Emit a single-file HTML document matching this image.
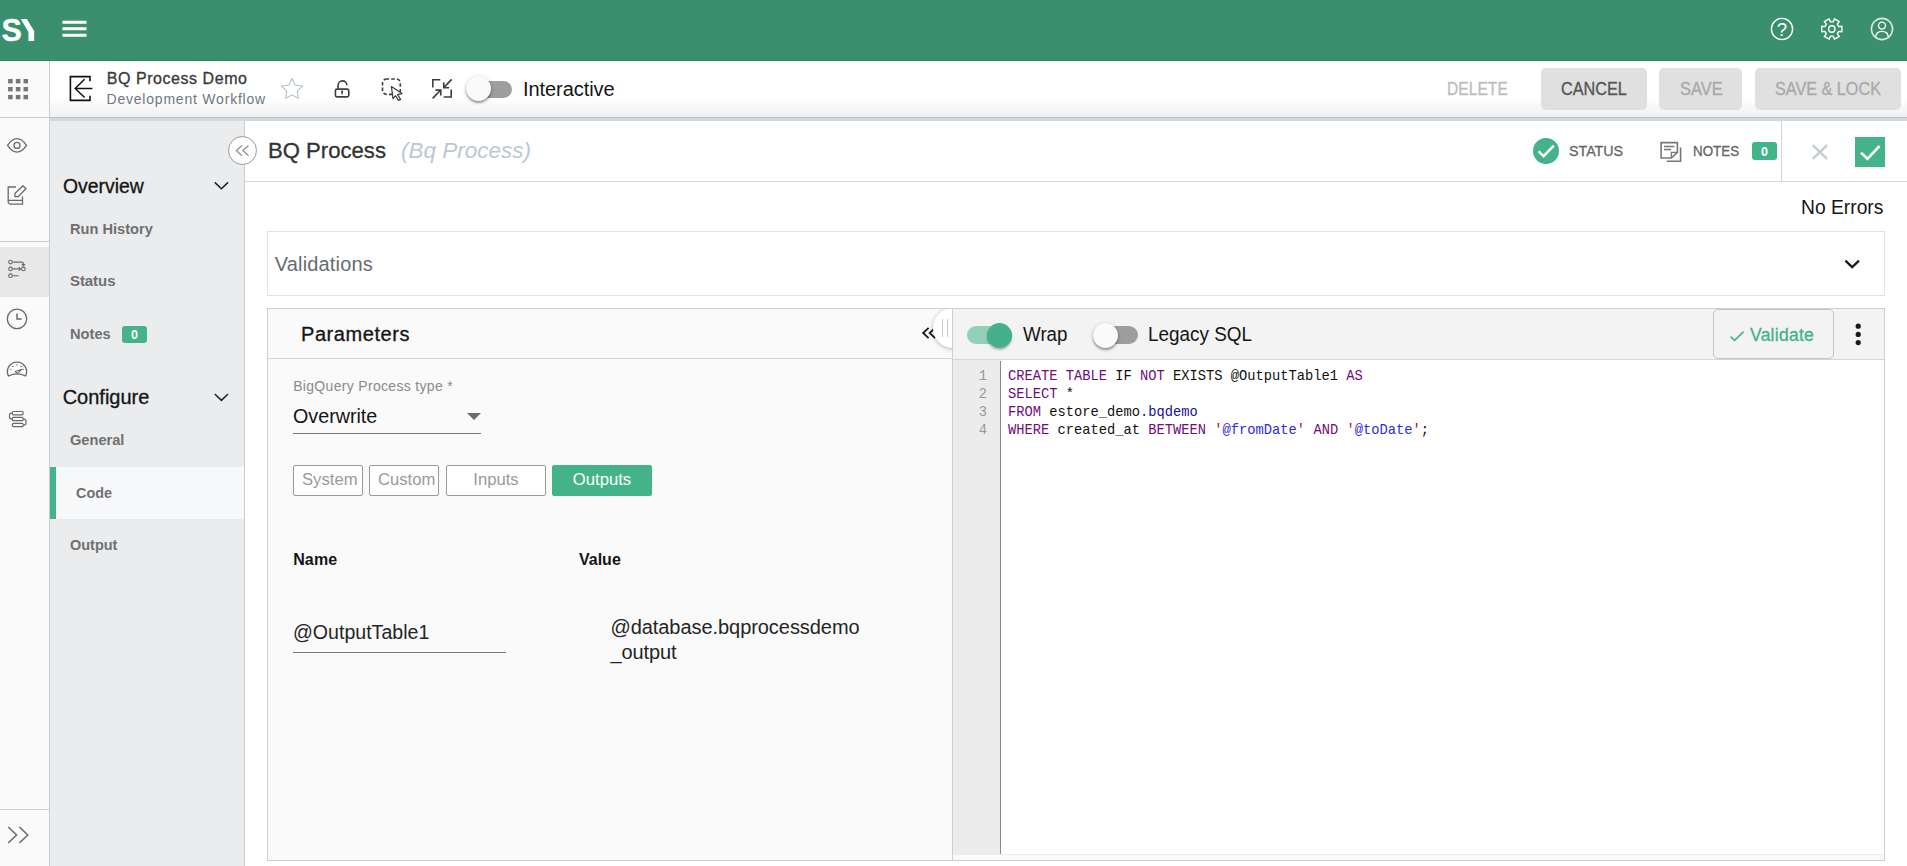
<!DOCTYPE html>
<html lang="en"><head><meta charset="utf-8"><title>BQ Process Demo</title>
<style>
*{box-sizing:border-box;margin:0;padding:0}
html,body{width:1907px;height:866px;overflow:hidden;background:#fff;font-family:"Liberation Sans",sans-serif}
.a{position:absolute}
.t{position:absolute;white-space:pre}
#top{left:0;top:0;width:1907px;height:61px;background:#3a8f6e;border-bottom:1px solid #318767}
#rail{left:0;top:61px;width:50px;height:805px;background:#fafafa;border-right:1px solid #c3ced8}
#tool{left:50px;top:61px;width:1857px;height:56px;background:linear-gradient(#fff 0,#fff 36px,#f1f1f1 56px)}
#band{left:50px;top:117px;width:1857px;height:4px;background:#d4d9dd;border-top:1px solid #b7c0c6}
#side{left:50px;top:121px;width:195px;height:745px;background:#ebecee;border-right:1px solid #c9ced3}
#main{left:245px;top:121px;width:1662px;height:745px;background:#fff}
.btn{border-radius:5px;background:#e0e0e0;height:42px;top:68px}
.pill{background:#45b38a;border-radius:3px}
.tab{top:465px;height:31px;border:1px solid #9a9a9a;background:#fff;border-radius:2px;color:#9a9a9a;font-size:16.67px;line-height:28px;text-align:center;white-space:nowrap}
svg{position:absolute;overflow:visible}
.code,.ln{font-family:"Liberation Mono",monospace;font-size:13.75px;line-height:18px;white-space:pre;color:#111}
.ln{text-align:right;color:#999}
.k{color:#730a7e}.v{color:#2b2be0}.p{color:#221199}.s{color:#aa1111}
.m{-webkit-text-stroke:.35px currentColor}

</style></head>
<body>
<div id="top" class="a"></div>
<div id="rail" class="a"></div>
<div id="tool" class="a"></div>
<div id="band" class="a"></div>
<div id="side" class="a"></div>
<div id="main" class="a"></div>

<!-- top bar -->
<span class="a" style="left:1.6px;top:11px;font-size:30.5px;font-weight:700;line-height:38px;color:#fff;-webkit-text-stroke:.4px #fff">S</span>
<span class="a" style="left:21.2px;top:11px;font-size:30.5px;font-weight:700;line-height:38px;color:#fff;-webkit-text-stroke:1.6px #fff;clip-path:polygon(-2px 8px,5.8px 8px,13.1px 20.6px,13.1px 30px,-2px 30px)">Y</span>
<svg style="left:62px;top:20px" width="25" height="18" viewBox="0 0 25 18"><path d="M0.5 2.3h24M0.5 8.8h24M0.5 15.3h24" stroke="#fff" stroke-width="3" fill="none"/></svg>

<!-- rail dividers -->
<div class="a" style="left:0;top:117px;width:49px;height:1px;background:#c3ced8"></div>
<div class="a" style="left:0;top:241px;width:49px;height:1px;background:#c3ced8"></div>
<div class="a" style="left:0;top:247px;width:49px;height:50px;background:#e8e8e8"></div>
<div class="a" style="left:0;top:809px;width:49px;height:1px;background:#c3ced8"></div>

<!-- toolbar buttons -->
<div class="a btn" style="left:1541px;width:106px"></div>
<div class="a btn" style="left:1659px;width:83px"></div>
<div class="a btn" style="left:1755px;width:146px"></div>

<!-- toolbar toggle -->
<div class="a" style="left:467px;top:81px;width:45px;height:17px;border-radius:9px;background:#9e9e9e"></div>
<div class="a" style="left:466px;top:76px;width:25px;height:25px;border-radius:50%;background:#fafafa;box-shadow:0 2px 2px rgba(0,0,0,.3),0 1px 4px rgba(0,0,0,.2)"></div>

<!-- side nav -->
<div class="a" style="left:50px;top:467px;width:194px;height:52px;background:#f8f9fb"></div>
<div class="a" style="left:50px;top:467px;width:6px;height:52px;background:#45b38a"></div>
<div class="a pill" style="left:122px;top:326px;width:25px;height:17px"></div>

<!-- main header -->
<div class="a" style="left:245px;top:181px;width:1662px;height:1px;background:#d9d9d9"></div>
<div class="a" style="left:1781px;top:121px;width:1px;height:60px;background:#d4d4d4"></div>
<div class="a" style="left:228px;top:136px;width:29px;height:29px;border-radius:50%;background:#fff;border:1.5px solid #9b9b9b"></div>
<div class="a" style="left:1533px;top:138px;width:26px;height:26px;border-radius:50%;background:#45b38a"></div>
<div class="a pill" style="left:1752px;top:142px;width:25px;height:18px"></div>
<div class="a" style="left:1855px;top:137px;width:30px;height:30px;background:#45b38a"></div>

<!-- validations -->
<div class="a" style="left:267px;top:231px;width:1618px;height:65px;border:1px solid #dde3ea;background:#fff"></div>

<!-- panel -->
<div class="a" style="left:267px;top:308px;width:1618px;height:553px;border:1px solid #cfcfcf;background:#fafafa"></div>
<div class="a" style="left:268px;top:358px;width:685px;height:1px;background:#d4d4d4"></div>
<div class="a" style="left:952px;top:309px;width:1px;height:551px;background:#cfcfcf"></div>
<div class="a" style="left:953px;top:309px;width:931px;height:51px;background:#f3f3f3;border-bottom:1px solid #d6d6d6"></div>
<div class="a" style="left:953px;top:360px;width:47px;height:494px;background:#ececec"></div><div class="a" style="left:1000px;top:361px;width:1px;height:493px;background:#8a8a8a"></div>
<div class="a" style="left:1001px;top:360px;width:883px;height:494px;background:#fff"></div>
<div class="a" style="left:953px;top:854px;width:931px;height:6px;background:#fafafa;border-top:1px solid #ececec"></div>

<!-- select -->
<div class="a" style="left:293px;top:433px;width:188px;height:1px;background:#7a7a7a"></div>
<svg style="left:467px;top:413px" width="14" height="7" viewBox="0 0 14 7"><path d="M0 0h14l-7 7z" fill="#6b6b6b"/></svg>

<!-- tabs -->
<div class="a tab" style="left:293px;width:70px;text-align:left;padding-left:8px">System</div>
<div class="a tab" style="left:369px;width:70px;text-align:left;padding-left:8px">Custom</div>
<div class="a tab" style="left:446px;width:100px">Inputs</div>
<div class="a tab" style="left:552px;width:100px;background:#45b38a;border-color:#45b38a;color:#fff">Outputs</div>

<!-- input underline -->
<div class="a" style="left:293px;top:652px;width:213px;height:1px;background:#7a7a7a"></div>

<!-- code toggles -->
<div class="a" style="left:967px;top:326px;width:45px;height:18px;border-radius:9px;background:#93d0b8"></div>
<div class="a" style="left:987px;top:323px;width:25px;height:25px;border-radius:50%;background:#45b08a;box-shadow:0 2px 2px rgba(0,0,0,.25)"></div>
<div class="a" style="left:1093px;top:326px;width:45px;height:18px;border-radius:9px;background:#9e9e9e"></div>
<div class="a" style="left:1093px;top:323px;width:25px;height:25px;border-radius:50%;background:#fafafa;box-shadow:0 2px 2px rgba(0,0,0,.3),0 1px 4px rgba(0,0,0,.2)"></div>

<!-- validate button -->
<div class="a" style="left:1713px;top:309px;width:121px;height:50px;border:1px solid #c4c4c4;border-radius:5px;background:#f3f3f3"></div>
<svg style="left:1768px;top:15px" width="28" height="28" viewBox="1768 15 28 28"><circle cx="1782" cy="29" r="10.6" fill="none" stroke="#fff" stroke-width="1.4"/><text x="1782" y="35.6" font-family="Liberation Sans, sans-serif" font-size="18.5" fill="#fff" text-anchor="middle">?</text></svg>
<svg style="left:1818px;top:15px" width="28" height="28" viewBox="1818 15 28 28"><path d="M1833.22,21.84 L1834.45,18.84 L1839.27,21.62 L1837.29,24.19 L1838.71,26.65 L1841.92,26.22 L1841.92,31.78 L1838.71,31.35 L1837.29,33.81 L1839.27,36.38 L1834.45,39.16 L1833.22,36.16 L1830.38,36.16 L1829.15,39.16 L1824.33,36.38 L1826.31,33.81 L1824.89,31.35 L1821.68,31.78 L1821.68,26.22 L1824.89,26.65 L1826.31,24.19 L1824.33,21.62 L1829.15,18.84 L1830.38,21.84Z" fill="none" stroke="#fff" stroke-width="1.4" stroke-linejoin="round"/><circle cx="1831.8" cy="29" r="3.2" fill="none" stroke="#fff" stroke-width="1.4"/></svg>
<svg style="left:1868px;top:15px" width="28" height="28" viewBox="1868 15 28 28"><circle cx="1882" cy="29" r="10.6" fill="none" stroke="#fff" stroke-opacity=".8" stroke-width="1.6"/><circle cx="1882" cy="25.6" r="3.5" fill="none" stroke="#fff" stroke-width="1.4"/><path d="M1875.6,37.2 C1876,32.4 1879,31.4 1882,31.4 C1885,31.4 1888,32.4 1888.4,37.2" fill="none" stroke="#fff" stroke-width="1.4"/></svg>
<svg style="left:6px;top:76px" width="26" height="26" viewBox="6 76 26 26"><rect x="8.1" y="79" width="4.6" height="4.4" fill="#767676"/><rect x="8.1" y="87" width="4.6" height="4.4" fill="#767676"/><rect x="8.1" y="94.9" width="4.6" height="4.4" fill="#767676"/><rect x="15.8" y="79" width="4.6" height="4.4" fill="#767676"/><rect x="15.8" y="87" width="4.6" height="4.4" fill="#767676"/><rect x="15.8" y="94.9" width="4.6" height="4.4" fill="#767676"/><rect x="23.5" y="79" width="4.6" height="4.4" fill="#767676"/><rect x="23.5" y="87" width="4.6" height="4.4" fill="#767676"/><rect x="23.5" y="94.9" width="4.6" height="4.4" fill="#767676"/></svg>
<svg style="left:66px;top:72px" width="30" height="32" viewBox="66 72 30 32"><path d="M90,81.2V76.6H70.4V100.4H90V95.8" fill="none" stroke="#111" stroke-width="1.6"/><path d="M92.4,88.5H75.2M84.6,79.3L75.2,88.5L84.6,97.5" fill="none" stroke="#111" stroke-width="1.5"/></svg>
<svg style="left:279px;top:75px" width="26" height="26" viewBox="279 75 26 26"><path d="M292.00,78.50 L295.23,84.95 L302.37,86.03 L297.23,91.10 L298.41,98.22 L292.00,94.90 L285.59,98.22 L286.77,91.10 L281.63,86.03 L288.77,84.95Z" fill="none" stroke="#b3c2ce" stroke-width="1.1" stroke-linejoin="round"/></svg>
<svg style="left:331px;top:77px" width="22" height="24" viewBox="331 77 22 24"><rect x="335.4" y="89.1" width="13.4" height="7.8" rx="1.6" fill="none" stroke="#423c3c" stroke-width="1.6"/><path d="M338.1,88.6V85.4A4.4,4.4 0 0 1 346.9,85.2" fill="none" stroke="#423c3c" stroke-width="1.6"/><circle cx="342.1" cy="91.6" r="1.1" fill="#423c3c"/><path d="M342.1,91.6V94.6" stroke="#423c3c" stroke-width="1.3"/></svg>
<svg style="left:379px;top:76px" width="26" height="27" viewBox="379 76 26 27"><rect x="382.5" y="79" width="17.8" height="15.4" rx="4" fill="none" stroke="#423c3c" stroke-width="1.6" stroke-dasharray="3.6 2.1" stroke-dashoffset="1"/><path d="M391.4,86.6L402,93.6L397.6,94.6L400.6,99.4L398.4,100.4L395.6,95.7L393,98.6Z" fill="#fff" stroke="#423c3c" stroke-width="1.2" stroke-linejoin="round"/></svg>
<svg style="left:430px;top:77px" width="24" height="24" viewBox="430 77 24 24"><path d="M440.3,79.8H432.8V87.4M443.6,97H451.2V89.6" fill="none" stroke="#423c3c" stroke-width="1.6"/><path d="M451.6,79.4L443.8,87.6M443.7,82.2V87.8H449.2" fill="none" stroke="#423c3c" stroke-width="1.6"/><path d="M432.6,98.4L440.6,90.2M435.4,90.1H440.8V95.6" fill="none" stroke="#423c3c" stroke-width="1.6"/></svg>
<svg style="left:5px;top:135px" width="25" height="20" viewBox="5 135 25 20"><path d="M7.6,145.4Q12,138.7 17,138.7Q22,138.7 26.5,145.4Q22,152.1 17,152.1Q12,152.1 7.6,145.4Z" fill="none" stroke="#6a6a6a" stroke-width="1.3"/><circle cx="17" cy="145.4" r="3" fill="none" stroke="#6a6a6a" stroke-width="1.3"/></svg>
<svg style="left:5px;top:183px" width="24" height="24" viewBox="5 183 24 24"><path d="M16,187H8.2V201.6A2.4,2.4 0 0 0 10.6,204.2H22.5V196.6M8.4,200.3H22.5" fill="none" stroke="#6a6a6a" stroke-width="1.3"/><path d="M22.9,185.7L25.9,188.8L18.2,196.6H14.9V193.5Z" fill="none" stroke="#6a6a6a" stroke-width="1.3" stroke-linejoin="round"/></svg>
<svg style="left:6px;top:258px" width="22" height="22" viewBox="6 258 22 22"><circle cx="10.5" cy="262.1" r="1.8" fill="none" stroke="#6a6a6a" stroke-width="1.1"/><circle cx="10.5" cy="268.9" r="1.8" fill="none" stroke="#6a6a6a" stroke-width="1.1"/><circle cx="10.5" cy="275.7" r="1.8" fill="none" stroke="#6a6a6a" stroke-width="1.1"/><circle cx="23.4" cy="268.9" r="1.8" fill="none" stroke="#6a6a6a" stroke-width="1.1"/><path d="M12.6,262.1H21.2Q23.4,262.1 23.4,264V265.6M21.8,264.2L23.4,265.9L25,264.2M12.6,268.9H20.4M18.8,267.2L20.6,268.9L18.8,270.6M12.6,275.7H18.6" fill="none" stroke="#6a6a6a" stroke-width="1.1"/></svg>
<svg style="left:5px;top:307px" width="24" height="24" viewBox="5 307 24 24"><circle cx="17" cy="318.9" r="9.7" fill="none" stroke="#6a6a6a" stroke-width="1.3"/><path d="M17,313.4V319H21.6" fill="none" stroke="#6a6a6a" stroke-width="1.5"/></svg>
<svg style="left:5px;top:359px" width="24" height="20" viewBox="5 359 24 20"><path d="M8.4,376A9.6,9.6 0 1 1 25.6,376Q17,371.6 8.4,376Z" fill="none" stroke="#6a6a6a" stroke-width="1.3" stroke-linejoin="round"/><circle cx="10.80" cy="369.34" r="0.7" fill="#6a6a6a"/><circle cx="12.76" cy="366.54" r="0.7" fill="#6a6a6a"/><circle cx="17.00" cy="365.00" r="0.7" fill="#6a6a6a"/><circle cx="21.24" cy="366.54" r="0.7" fill="#6a6a6a"/><circle cx="23.20" cy="369.34" r="0.7" fill="#6a6a6a"/><path d="M15.2,371.4L22,369.2L17.4,373.6Z" fill="none" stroke="#6a6a6a" stroke-width="1.1" stroke-linejoin="round"/></svg>
<svg style="left:7px;top:409px" width="22" height="20" viewBox="7 409 22 20"><rect x="12.4" y="411.5" width="10.7" height="3.3" rx="1" fill="none" stroke="#6a6a6a" stroke-width="1.2"/><rect x="12.4" y="417.4" width="10.7" height="3.3" rx="1" fill="none" stroke="#6a6a6a" stroke-width="1.2"/><rect x="12.4" y="423.3" width="10.7" height="3.3" rx="1" fill="none" stroke="#6a6a6a" stroke-width="1.2"/><path d="M12.4,413.1H11.6Q9.5,413.1 9.5,415.1V417.1Q9.5,419.1 11.6,419.1H12.4M23.1,419.1H23.9Q26,419.1 26,421.1V423Q26,425 23.9,425H23.1" fill="none" stroke="#6a6a6a" stroke-width="1.2"/></svg>
<svg style="left:6px;top:825px" width="24" height="20" viewBox="6 825 24 20"><path d="M8.2,827L16.6,835L8.2,843M19.4,827L27.8,835L19.4,843" fill="none" stroke="#6a6a6a" stroke-width="1.5"/></svg>
<svg style="left:213px;top:180px" width="17" height="11" viewBox="213 180 17 11"><path d="M214.8,182.4L221.4,188.8L228,182.4" fill="none" stroke="#222" stroke-width="1.5"/></svg>
<svg style="left:213px;top:392px" width="17" height="11" viewBox="213 392 17 11"><path d="M214.8,394L221.4,400.4L228,394" fill="none" stroke="#222" stroke-width="1.5"/></svg>
<svg style="left:233px;top:143px" width="20" height="15" viewBox="233 143 20 15"><path d="M241.9,145.4L236.4,150.6L241.9,155.7M248.5,145.4L243,150.6L248.5,155.7" fill="none" stroke="#949494" stroke-width="1.4"/></svg>
<svg style="left:1534px;top:140px" width="24" height="22" viewBox="1534 140 24 22"><path d="M1538.6,151.4L1543.6,156.2L1553.8,145.6" fill="none" stroke="#fff" stroke-width="2.4"/></svg>
<svg style="left:1658px;top:140px" width="25" height="24" viewBox="1658 140 25 24"><path d="M1661.1,142.6H1677.4V152.4L1671.4,158H1661.1Z" fill="none" stroke="#787878" stroke-width="1.6"/><path d="M1677.4,152.4H1671.4V158" fill="none" stroke="#787878" stroke-width="1.4"/><path d="M1664,146.5H1674.4M1664,149.5H1671" fill="none" stroke="#787878" stroke-width="1.4"/><path d="M1680.6,147.6V161.2H1666.6" fill="none" stroke="#787878" stroke-width="1.6"/></svg>
<svg style="left:1810px;top:142px" width="20" height="20" viewBox="1810 142 20 20"><path d="M1812.8,145.2L1827,158.8M1827,145.2L1812.8,158.8" fill="none" stroke="#c3ccd3" stroke-width="2.3"/></svg>
<svg style="left:1857px;top:141px" width="26" height="22" viewBox="1857 141 26 22"><path d="M1861,152.6L1867.4,158.8L1879.6,146" fill="none" stroke="#fff" stroke-width="2.6"/></svg>
<svg style="left:1842px;top:257px" width="20" height="14" viewBox="1842 257 20 14"><path d="M1845.4,260.6L1852.2,267.2L1859,260.6" fill="none" stroke="#1a1a1a" stroke-width="2.3"/></svg>
<svg style="left:920px;top:326px" width="16" height="15" viewBox="920 326 16 15"><path d="M928.6,327.8L923.1,333L928.6,338.2M935.1,327.8L929.6,333L935.1,338.2" fill="none" stroke="#1a1a1a" stroke-width="1.8"/></svg>
<svg style="left:1728px;top:329px" width="18" height="14" viewBox="1728 329 18 14"><path d="M1730.6,336.6L1734.6,340.4L1743.6,331.6" fill="none" stroke="#45b38a" stroke-width="1.6"/></svg>
<svg style="left:1853px;top:322px" width="10" height="26" viewBox="1853 322 10 26"><circle cx="1858.2" cy="326.2" r="2.6" fill="#1a1a1a"/><circle cx="1858.2" cy="334.4" r="2.6" fill="#1a1a1a"/><circle cx="1858.2" cy="342.6" r="2.6" fill="#1a1a1a"/></svg>
<div class="a" style="left:926px;top:309px;width:26px;height:46px;overflow:hidden"><div class="a" style="left:7px;top:-1px;width:40px;height:40px;border-radius:50%;background:#fff;box-shadow:0 1px 4px rgba(0,0,0,.28)"></div></div>
<div class="a" style="left:942px;top:319px;width:1px;height:18px;background:#cacaca"></div>
<div class="a" style="left:947px;top:319px;width:1px;height:18px;background:#cacaca"></div>
<div class="a ln" style="left:953px;top:368px;width:34px">1
2
3
4</div>
<div class="a code" style="left:1008px;top:368px"><span class="k">CREATE</span> <span class="k">TABLE</span> IF <span class="k">NOT</span> EXISTS @OutputTable1 <span class="k">AS</span>
<span class="k">SELECT</span> *
<span class="k">FROM</span> estore_demo<span class="p">.bqdemo</span>
<span class="k">WHERE</span> created_at <span class="k">BETWEEN</span> <span class="s">'</span><span class="v">@fromDate</span><span class="s">'</span> <span class="k">AND</span> <span class="s">'</span><span class="v">@toDate</span><span class="s">'</span>;</div>


<span class="t" style='left:106.7px;top:69px;line-height:19px;letter-spacing:0.554px;color:#3a3a3a;font-size:16px;-webkit-text-stroke:.32px currentColor;'>BQ Process Demo</span>
<span class="t" style='left:106.5px;top:91px;line-height:17px;letter-spacing:0.791px;color:#6c7884;font-size:14px;'>Development Workflow</span>
<span class="t" style='left:523.0px;top:77px;line-height:24px;letter-spacing:-0.070px;color:#151515;font-size:20px;'>Interactive</span>
<span class="t" style='left:1447.3px;top:79px;line-height:21px;transform:scaleX(0.8931);transform-origin:0 0;color:#bdbdbd;font-size:17.5px;-webkit-text-stroke:.32px currentColor;'>DELETE</span>
<span class="t" style='left:1561.0px;top:79px;line-height:21px;transform:scaleX(0.9268);transform-origin:0 0;color:#555;font-size:17.5px;-webkit-text-stroke:.32px currentColor;'>CANCEL</span>
<span class="t" style='left:1679.7px;top:79px;line-height:21px;transform:scaleX(0.9385);transform-origin:0 0;color:#a9a9a9;font-size:17.5px;-webkit-text-stroke:.32px currentColor;'>SAVE</span>
<span class="t" style='left:1775.0px;top:79px;line-height:21px;transform:scaleX(0.9261);transform-origin:0 0;color:#a9a9a9;font-size:17.5px;-webkit-text-stroke:.32px currentColor;'>SAVE &amp; LOCK</span>
<span class="t" style='left:267.8px;top:137px;line-height:27px;transform:scaleX(0.9829);transform-origin:0 0;color:#333;font-size:22.5px;-webkit-text-stroke:.32px currentColor;'>BQ Process</span>
<span class="t" style='left:401.0px;top:137px;line-height:27px;letter-spacing:-0.004px;color:#bcc8d2;font-size:22.5px;font-style:italic;'>(Bq Process)</span>
<span class="t" style='left:1568.7px;top:142px;line-height:18px;transform:scaleX(0.9499);transform-origin:0 0;color:#666;font-size:15px;-webkit-text-stroke:.32px currentColor;'>STATUS</span>
<span class="t" style='left:1693.4px;top:142px;line-height:18px;transform:scaleX(0.8919);transform-origin:0 0;color:#666;font-size:15px;-webkit-text-stroke:.32px currentColor;'>NOTES</span>
<span class="t" style='left:1761.0px;top:145px;line-height:15px;letter-spacing:0.047px;color:#fff;font-size:12.5px;font-weight:700;'>0</span>
<span class="t" style='left:1801.4px;top:195px;line-height:24px;transform:scaleX(0.9629);transform-origin:0 0;color:#151515;font-size:20px;'>No Errors</span>
<span class="t" style='left:274.8px;top:252px;line-height:24px;letter-spacing:0.158px;color:#666c72;font-size:20px;'>Validations</span>
<span class="t" style='left:301.0px;top:322px;line-height:24px;letter-spacing:0.562px;color:#151515;font-size:20px;-webkit-text-stroke:.32px currentColor;'>Parameters</span>
<span class="t" style='left:1022.7px;top:322px;line-height:24px;transform:scaleX(0.9384);transform-origin:0 0;color:#151515;font-size:20px;'>Wrap</span>
<span class="t" style='left:1148.0px;top:322px;line-height:24px;transform:scaleX(0.9448);transform-origin:0 0;color:#151515;font-size:20px;'>Legacy SQL</span>
<span class="t" style='left:1750.0px;top:325px;line-height:21px;letter-spacing:0.256px;color:#45b38a;font-size:17.5px;-webkit-text-stroke:.32px currentColor;'>Validate</span>
<span class="t" style='left:293.2px;top:378px;line-height:17px;letter-spacing:0.317px;color:#8a8a8a;font-size:14px;'>BigQuery Process type *</span>
<span class="t" style='left:293.2px;top:404px;line-height:24px;transform:scaleX(0.9851);transform-origin:0 0;color:#151515;font-size:20px;'>Overwrite</span>
<span class="t" style='left:293.2px;top:550px;line-height:19px;letter-spacing:0.130px;color:#151515;font-size:16px;font-weight:700;'>Name</span>
<span class="t" style='left:579.0px;top:550px;line-height:19px;letter-spacing:-0.003px;color:#151515;font-size:16px;font-weight:700;'>Value</span>
<span class="t" style='left:293.2px;top:620px;line-height:24px;transform:scaleX(0.9786);transform-origin:0 0;color:#252525;font-size:20px;'>@OutputTable1</span>
<span class="t" style='left:610.4px;top:615px;line-height:24px;letter-spacing:-0.055px;color:#252525;font-size:20px;'>@database.bqprocessdemo</span>
<span class="t" style='left:610.4px;top:640px;line-height:24px;letter-spacing:-0.091px;color:#252525;font-size:20px;'>_output</span>
<span class="t" style='left:62.7px;top:174px;line-height:24px;transform:scaleX(0.9693);transform-origin:0 0;color:#151515;font-size:20px;-webkit-text-stroke:.32px currentColor;'>Overview</span>
<span class="t" style='left:70.0px;top:220px;line-height:18px;transform:scaleX(0.9739);transform-origin:0 0;color:#707070;font-size:15px;font-weight:700;'>Run History</span>
<span class="t" style='left:70.0px;top:272px;line-height:18px;letter-spacing:-0.074px;color:#707070;font-size:15px;font-weight:700;'>Status</span>
<span class="t" style='left:70.0px;top:325px;line-height:18px;transform:scaleX(0.9763);transform-origin:0 0;color:#707070;font-size:15px;font-weight:700;'>Notes</span>
<span class="t" style='left:131.0px;top:328px;line-height:15px;letter-spacing:0.047px;color:#fff;font-size:12.5px;font-weight:700;'>0</span>
<span class="t" style='left:62.7px;top:385px;line-height:24px;letter-spacing:-0.013px;color:#151515;font-size:20px;-webkit-text-stroke:.32px currentColor;'>Configure</span>
<span class="t" style='left:70.0px;top:431px;line-height:18px;transform:scaleX(0.9736);transform-origin:0 0;color:#707070;font-size:15px;font-weight:700;'>General</span>
<span class="t" style='left:75.9px;top:484px;line-height:18px;transform:scaleX(0.9600);transform-origin:0 0;color:#707070;font-size:15px;font-weight:700;'>Code</span>
<span class="t" style='left:70.0px;top:536px;line-height:18px;transform:scaleX(0.9643);transform-origin:0 0;color:#707070;font-size:15px;font-weight:700;'>Output</span>
</body></html>
